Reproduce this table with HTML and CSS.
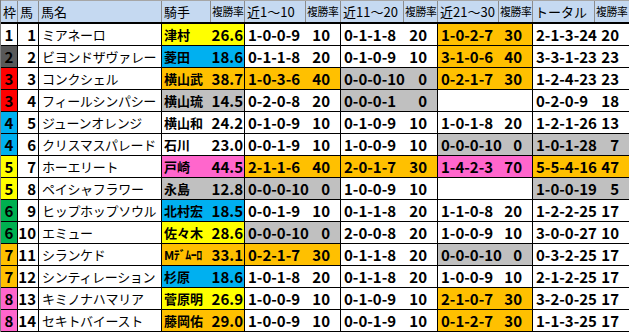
FILE: index.html
```html
<!DOCTYPE html>
<html lang="ja">
<head>
<meta charset="utf-8">
<link rel="stylesheet" href="styles.css">
</head>
<body>
<div class="sheet">
  <div class="hrow">
    <div class="hc">枠</div><div class="hc">馬</div><div class="hc">馬名</div><div class="hc">騎手</div><div class="hc sm">複勝率</div>
    <div class="hc">近1～10</div><div class="hc sm">複勝率</div><div class="hc">近11～20</div><div class="hc sm">複勝率</div>
    <div class="hc">近21～30</div><div class="hc sm">複勝率</div><div class="hc">トータル</div><div class="hc sm">複勝率</div>
  </div>

  <div class="row">
    <div class="waku w1">1</div><div class="uma">1</div><div class="name">ミアネーロ</div>
    <div class="jk yellow"><span class="jn">津村</span><span class="num">26.6</span></div>
    <div class="pr"><span class="num">1-0-0-9</span><span class="num">10</span></div>
    <div class="pr"><span class="num">0-1-1-8</span><span class="num">20</span></div>
    <div class="pr orange"><span class="num">1-0-2-7</span><span class="num">30</span></div>
    <div class="pr"><span class="num">2-1-3-24</span><span class="num">20</span></div>
  </div>

  <div class="row">
    <div class="waku w2">2</div><div class="uma">2</div><div class="name">ビヨンドザヴァレー</div>
    <div class="jk blue"><span class="jn">菱田</span><span class="num">18.6</span></div>
    <div class="pr"><span class="num">0-1-1-8</span><span class="num">20</span></div>
    <div class="pr"><span class="num">0-1-0-9</span><span class="num">10</span></div>
    <div class="pr orange"><span class="num">3-1-0-6</span><span class="num">40</span></div>
    <div class="pr"><span class="num">3-3-1-23</span><span class="num">23</span></div>
  </div>

  <div class="row">
    <div class="waku w3">3</div><div class="uma">3</div><div class="name">コンクシェル</div>
    <div class="jk orange"><span class="jn">横山武</span><span class="num">38.7</span></div>
    <div class="pr orange"><span class="num">1-0-3-6</span><span class="num">40</span></div>
    <div class="pr gray"><span class="num">0-0-0-10</span><span class="num">0</span></div>
    <div class="pr orange"><span class="num">0-2-1-7</span><span class="num">30</span></div>
    <div class="pr"><span class="num">1-2-4-23</span><span class="num">23</span></div>
  </div>

  <div class="row">
    <div class="waku w3">3</div><div class="uma">4</div><div class="name">フィールシンパシー</div>
    <div class="jk gray"><span class="jn">横山琉</span><span class="num">14.5</span></div>
    <div class="pr"><span class="num">0-2-0-8</span><span class="num">20</span></div>
    <div class="pr gray"><span class="num">0-0-0-1</span><span class="num">0</span></div>
    <div class="pr"></div>
    <div class="pr"><span class="num">0-2-0-9</span><span class="num">18</span></div>
  </div>

  <div class="row">
    <div class="waku w4">4</div><div class="uma">5</div><div class="name">ジューンオレンジ</div>
    <div class="jk"><span class="jn">横山和</span><span class="num">24.2</span></div>
    <div class="pr"><span class="num">0-1-0-9</span><span class="num">10</span></div>
    <div class="pr"><span class="num">0-1-0-9</span><span class="num">10</span></div>
    <div class="pr"><span class="num">1-0-1-8</span><span class="num">20</span></div>
    <div class="pr"><span class="num">1-2-1-26</span><span class="num">13</span></div>
  </div>

  <div class="row">
    <div class="waku w4">4</div><div class="uma">6</div><div class="name">クリスマスパレード</div>
    <div class="jk"><span class="jn">石川</span><span class="num">23.0</span></div>
    <div class="pr"><span class="num">0-0-1-9</span><span class="num">10</span></div>
    <div class="pr"><span class="num">1-0-0-9</span><span class="num">10</span></div>
    <div class="pr gray"><span class="num">0-0-0-10</span><span class="num">0</span></div>
    <div class="pr gray"><span class="num">1-0-1-28</span><span class="num">7</span></div>
  </div>

  <div class="row">
    <div class="waku w5">5</div><div class="uma">7</div><div class="name">ホーエリート</div>
    <div class="jk pink"><span class="jn">戸崎</span><span class="num">44.5</span></div>
    <div class="pr orange"><span class="num">2-1-1-6</span><span class="num">40</span></div>
    <div class="pr orange"><span class="num">2-0-1-7</span><span class="num">30</span></div>
    <div class="pr pink"><span class="num">1-4-2-3</span><span class="num">70</span></div>
    <div class="pr orange"><span class="num">5-5-4-16</span><span class="num">47</span></div>
  </div>

  <div class="row">
    <div class="waku w5">5</div><div class="uma">8</div><div class="name">ペイシャフラワー</div>
    <div class="jk gray"><span class="jn">永島</span><span class="num">12.8</span></div>
    <div class="pr gray"><span class="num">0-0-0-10</span><span class="num">0</span></div>
    <div class="pr"><span class="num">1-0-0-9</span><span class="num">10</span></div>
    <div class="pr"></div>
    <div class="pr gray"><span class="num">1-0-0-19</span><span class="num">5</span></div>
  </div>

  <div class="row">
    <div class="waku w6">6</div><div class="uma">9</div><div class="name">ヒップホップソウル</div>
    <div class="jk blue"><span class="jn">北村宏</span><span class="num">18.5</span></div>
    <div class="pr"><span class="num">0-0-1-9</span><span class="num">10</span></div>
    <div class="pr"><span class="num">0-1-1-8</span><span class="num">20</span></div>
    <div class="pr"><span class="num">1-1-0-8</span><span class="num">20</span></div>
    <div class="pr"><span class="num">1-2-2-25</span><span class="num">17</span></div>
  </div>

  <div class="row">
    <div class="waku w6">6</div><div class="uma">10</div><div class="name">エミュー</div>
    <div class="jk yellow"><span class="jn">佐々木</span><span class="num">28.6</span></div>
    <div class="pr gray"><span class="num">0-0-0-10</span><span class="num">0</span></div>
    <div class="pr"><span class="num">2-0-0-8</span><span class="num">20</span></div>
    <div class="pr"><span class="num">1-0-0-9</span><span class="num">10</span></div>
    <div class="pr"><span class="num">3-0-0-27</span><span class="num">10</span></div>
  </div>

  <div class="row">
    <div class="waku w7">7</div><div class="uma">11</div><div class="name">シランケド</div>
    <div class="jk orange"><span class="jn half">Mﾃﾞﾑｰﾛ</span><span class="num">33.1</span></div>
    <div class="pr orange"><span class="num">0-2-1-7</span><span class="num">30</span></div>
    <div class="pr"><span class="num">0-1-1-8</span><span class="num">20</span></div>
    <div class="pr gray"><span class="num">0-0-0-10</span><span class="num">0</span></div>
    <div class="pr"><span class="num">0-3-2-25</span><span class="num">17</span></div>
  </div>

  <div class="row">
    <div class="waku w7">7</div><div class="uma">12</div><div class="name">シンティレーション</div>
    <div class="jk blue"><span class="jn">杉原</span><span class="num">18.6</span></div>
    <div class="pr"><span class="num">1-0-1-8</span><span class="num">20</span></div>
    <div class="pr"><span class="num">0-1-1-8</span><span class="num">20</span></div>
    <div class="pr"><span class="num">1-0-0-9</span><span class="num">10</span></div>
    <div class="pr"><span class="num">2-1-2-25</span><span class="num">17</span></div>
  </div>

  <div class="row">
    <div class="waku w8">8</div><div class="uma">13</div><div class="name">キミノナハマリア</div>
    <div class="jk yellow"><span class="jn">菅原明</span><span class="num">26.9</span></div>
    <div class="pr"><span class="num">1-0-0-9</span><span class="num">10</span></div>
    <div class="pr"><span class="num">0-1-0-9</span><span class="num">10</span></div>
    <div class="pr orange"><span class="num">2-1-0-7</span><span class="num">30</span></div>
    <div class="pr"><span class="num">3-2-0-25</span><span class="num">17</span></div>
  </div>

  <div class="row">
    <div class="waku w8">8</div><div class="uma">14</div><div class="name">セキトバイースト</div>
    <div class="jk orange"><span class="jn">藤岡佑</span><span class="num">29.0</span></div>
    <div class="pr"><span class="num">1-0-0-9</span><span class="num">10</span></div>
    <div class="pr"><span class="num">0-0-1-9</span><span class="num">10</span></div>
    <div class="pr orange"><span class="num">0-1-2-7</span><span class="num">30</span></div>
    <div class="pr"><span class="num">1-1-3-25</span><span class="num">17</span></div>
  </div>
</div>
</body>
</html>
```

FILE: styles.css
```css
html, body {
  margin: 0;
  padding: 0;
  background: #ffffff;
}

body {
  font-family: "Noto Sans CJK JP", "Noto Sans", sans-serif;
  color: #000;
}

.sheet {
  width: 629px;
  box-sizing: border-box;
  border-left: 1px solid #7f7f7f;
}

.hrow,
.row {
  display: grid;
  grid-template-columns: 17px 21px 123px 49px 34px 61px 35px 63px 34px 61px 34px 62px 35px;
}

.hrow {
  height: 24px;
  box-sizing: border-box;
  border-top: 1px solid #a6a6a6;
  border-bottom: 2px solid #000;
  background: #c5d9f1;
}

.hc {
  box-sizing: border-box;
  border-right: 1px solid #8c8c8c;
  font-size: 13px;
  line-height: 21px;
  padding-left: 2px;
  white-space: nowrap;
  overflow: hidden;
}

.hc.sm {
  font-size: 10.8px;
  padding-left: 1px;
  letter-spacing: -0.3px;
}

.row {
  height: 22px;
  box-sizing: border-box;
  border-bottom: 1px solid #000;
}

.row > div {
  box-sizing: border-box;
  border-right: 1px solid #000;
  white-space: nowrap;
  overflow: hidden;
  line-height: 21px;
}

.waku {
  text-align: center;
  font-size: 15px;
  font-weight: bold;
}

.uma {
  text-align: right;
  padding-right: 2px;
  font-size: 15px;
  font-weight: bold;
}

.name {
  font-size: 13px;
  padding-left: 3px;
  letter-spacing: -0.3px;
}

.jk,
.pr {
  grid-column: span 2;
  display: flex;
  justify-content: space-between;
  align-items: center;
}

.jk {
  padding: 0 1px 0 2px;
}

.pr {
  padding: 0 10px 0 3px;
}

.jn {
  font-size: 13px;
  font-weight: bold;
}

.jn.half {
  font-size: 12px;
  letter-spacing: -0.5px;
}

.num {
  font-size: 15px;
  font-weight: bold;
}

.w1 { background: #ffffff; }
.w2 { background: #595959; }
.w3 { background: #ff0000; }
.w4 { background: #00b0f0; }
.w5 { background: #ffff00; }
.w6 { background: #00b050; }
.w7 { background: #ffc000; }
.w8 { background: #ff66cc; }

.yellow { background: #ffff00; }
.blue { background: #00b0f0; }
.orange { background: #ffc000; }
.gray { background: #c0c0c0; }
.pink { background: #ff66cc; }
```
